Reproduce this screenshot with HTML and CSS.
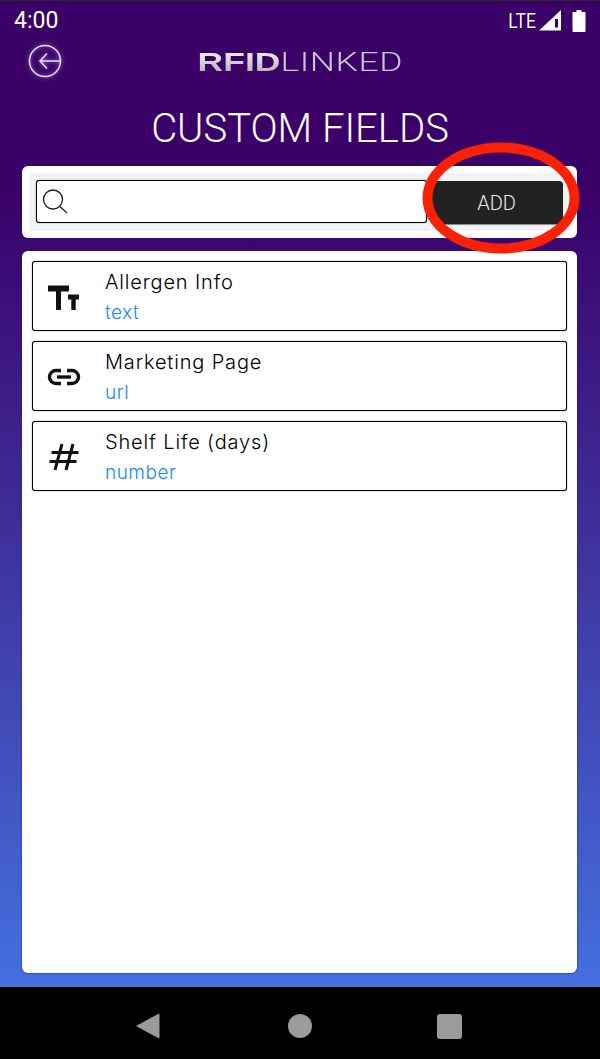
FILE: index.html
```html
<!DOCTYPE html>
<html lang="en">
<head>
    <meta charset="UTF-8">
    <meta name="viewport" content="width=device-width, initial-scale=1.0">
    <title>Custom Fields</title>
    <link rel="stylesheet" href="styles.css">
</head>
<body>

<div class="screen">
    <div class="app">
        <div class="status-bar">
            <span class="clock">4:00</span>
            <div class="status-icons">
                <span class="lte">LTE</span>
                <svg class="signal" width="22" height="22" viewBox="0 0 22 22">
                    <path d="M22 0V20.500H0Z" fill="#fff"/>
                    <path d="M16 9H19V17.500H16Z" fill="#3a0068"/>
                </svg>
                <svg class="battery" width="14" height="22" viewBox="0 0 14 22">
                    <path d="M4.500 0H9.500V2H12.500A1 1 0 0 1 13.500 3V21A1 1 0 0 1 12.500 22H1.500A1 1 0 0 1 .5 21V3A1 1 0 0 1 1.500 2H4.500Z" fill="#fff"/>
                </svg>
            </div>
        </div>

        <div class="top-bar">
            <svg class="back" width="36" height="36" viewBox="0 0 36 36" fill="none" stroke="#e6def0" stroke-width="1.500">
                <circle cx="18" cy="18" r="15.500"/>
                <path d="M33.500 18H13M20 10.500L13 18L20 25.500"/>
            </svg>
            <div class="logo"><span class="logo-bold">RFID</span><span class="logo-thin">LINKED</span></div>
        </div>

        <h1 class="page-title">CUSTOM FIELDS</h1>

        <div class="search-panel">
            <div class="search-inner">
                <div class="search-box">
                    <svg width="28" height="28" viewBox="0 0 28 28" fill="none" stroke="#222" stroke-width="1.300">
                        <circle cx="12" cy="11.500" r="9.500"/>
                        <path d="M19 18.500L26 25"/>
                    </svg>
                </div>
                <button class="add-btn" type="button">ADD</button>
            </div>
        </div>

        <div class="list-panel">
            <div class="field-row">
                <div class="field-icon">
                    <svg width="34" height="25" viewBox="0 0 34 25" fill="#111">
                        <path d="M1 .5H22V6.500H14V25H9V6.500H1Z"/>
                        <path d="M21 9.500H32V14.500H28.700V25H24.300V14.500H21Z"/>
                    </svg>
                </div>
                <div class="field-text">
                    <div class="field-name">Allergen Info</div>
                    <div class="field-type">text</div>
                </div>
            </div>
            <div class="field-row">
                <div class="field-icon">
                    <svg width="34" height="18" viewBox="0 0 34 18" fill="none" stroke="#111" stroke-width="3.400">
                        <path d="M14 2.500H9A6.500 6.500 0 0 0 9 15.500H14"/>
                        <path d="M20 2.500H25A6.500 6.500 0 0 1 25 15.500H20"/>
                        <path d="M10 9H24"/>
                    </svg>
                </div>
                <div class="field-text">
                    <div class="field-name">Marketing Page</div>
                    <div class="field-type">url</div>
                </div>
            </div>
            <div class="field-row">
                <div class="field-icon">
                    <svg width="30" height="30" viewBox="0 0 30 30" fill="none" stroke="#111" stroke-width="3">
                        <path d="M13 2L6 28M24 2L17 28M2.500 10.500H29.500M.5 19.500H27.500"/>
                    </svg>
                </div>
                <div class="field-text">
                    <div class="field-name">Shelf Life (days)</div>
                    <div class="field-type">number</div>
                </div>
            </div>
        </div>

        <!-- red marker drawn over the add button -->
        <svg class="marker" width="160" height="114" viewBox="0 0 160 114" fill="none">
            <ellipse cx="79" cy="56" rx="73.500" ry="50.500" stroke="#fb2104" stroke-width="10"/>
        </svg>
    </div>

    <div class="nav-bar">
        <svg width="25" height="28" viewBox="0 0 26 28" fill="#9b9b9b"><path d="M24 1.500Q25.500 .8 25.500 2.500V25.500Q25.500 27.200 24 26.500L1 14Z"/></svg>
        <div class="nav-circle"></div>
        <div class="nav-square"></div>
    </div>
</div>

</body>
</html>
```

FILE: styles.css
```css
body {
    margin: 0;
    padding: 0;
    font-family: "Inter", "Liberation Sans", sans-serif;
    background-color: #000;
}
.screen {
    width: 600px;
    height: 1059px;
    display: flex;
    flex-direction: column;
    overflow: hidden;
}
.app {
    position: relative;
    flex: 1;
    display: flex;
    flex-direction: column;
    padding: 0 23px 14px 22px;
    border-top: 1px solid #2a2a2a;
    background: linear-gradient(#3a0068 0, #3a0068 190px, #4470e0 100%);
}
.status-bar {
    height: 39px;
    margin: 0 -9px 0 -8px;
    display: flex;
    align-items: center;
    justify-content: space-between;
    color: #fff;
}
.clock {
    font-family: "Roboto", sans-serif;
    font-size: 23px;
}
.status-icons {
    display: flex;
    align-items: center;
    gap: 3px;
}
.lte {
    font-family: "Roboto", sans-serif;
    font-size: 21px;
    transform: scaleX(.84);
    transform-origin: right center;
}
.battery {
    margin-left: 8px;
}
.top-bar {
    position: relative;
    height: 44px;
    display: flex;
    align-items: center;
    justify-content: center;
}
.back {
    position: absolute;
    left: 5px;
    top: 3px;
    filter: drop-shadow(0 0 2px #a98ad0);
}
.logo {
    font-family: "Liberation Sans", sans-serif;
    font-size: 25px;
    line-height: 1;
    display: flex;
    transform: scaleX(1.42);
    margin-left: 1px;
}
.logo-bold {
    font-weight: bold;
    background: linear-gradient(#f4f4f4, #adadb0);
    -webkit-background-clip: text;
    background-clip: text;
    color: transparent;
}
.logo-thin {
    font-family: "Roboto", sans-serif;
    font-weight: 300;
    letter-spacing: .4px;
    color: #c8c8d2;
}
.page-title {
    margin: 0 0 0 1px;
    height: 82px;
    box-sizing: border-box;
    padding-top: 21px;
    font-family: "Roboto", sans-serif;
    font-weight: 300;
    font-size: 40px;
    line-height: 48px;
    text-align: center;
    color: #fff;
}
.search-panel {
    box-sizing: border-box;
    height: 72px;
    padding: 7px;
    background-color: #fff;
    border-radius: 6px;
    box-shadow: 0 0 2px #1a1a8a;
}
.search-inner {
    height: 100%;
    box-sizing: border-box;
    padding: 7px 7px 8px 7px;
    display: flex;
    gap: 5px;
    background-color: #f3f3f3;
}
.search-box {
    flex: 1;
    box-sizing: border-box;
    display: flex;
    align-items: center;
    padding-left: 4px;
    background-color: #fff;
    border: 1px solid #000;
    border-radius: 3px;
    box-shadow: 0 0 1px #000;
}
.add-btn {
    width: 131px;
    height: 43px;
    margin-top: 1px;
    padding: 0 2px 0 0;
    font-family: "Roboto", sans-serif;
    font-weight: 300;
    font-size: 20px;
    color: #e8e8e8;
    background-color: #222;
    border: none;
    border-radius: 4px;
    box-shadow: 0 1px 1px #888;
}
.list-panel {
    flex: 1;
    margin-top: 13px;
    padding: 10px;
    display: flex;
    flex-direction: column;
    gap: 10px;
    background-color: #fff;
    border-radius: 6px;
    box-shadow: 0 0 2px #1a1a8a;
}
.field-row {
    box-sizing: border-box;
    height: 70px;
    display: flex;
    align-items: center;
    background-color: #fff;
    border: 1px solid #000;
    border-radius: 3px;
    box-shadow: 0 0 1px #000;
}
.field-icon {
    width: 62px;
    padding-top: 2px;
    display: flex;
    justify-content: center;
}
.field-text {
    margin-left: 10px;
    padding-top: 1px;
}
.field-name {
    font-weight: 300;
    font-size: 20px;
    line-height: 26px;
    letter-spacing: .85px;
    color: #000;
}
.field-type {
    margin-top: 6px;
    font-weight: 300;
    font-size: 19px;
    line-height: 24px;
    letter-spacing: .5px;
    color: #1488ff;
}
.marker {
    position: absolute;
    left: 422px;
    top: 141px;
}
.nav-bar {
    box-sizing: border-box;
    height: 72px;
    flex-shrink: 0;
    display: flex;
    align-items: center;
    justify-content: center;
    background-color: #000;
    padding: 6px 3px 0 0;
}
.nav-bar svg {
    margin-right: 128px;
}
.nav-circle {
    width: 24px;
    height: 24px;
    border-radius: 50%;
    background-color: #9b9b9b;
}
.nav-square {
    width: 25px;
    height: 25px;
    margin-left: 125px;
    border-radius: 3px;
    background-color: #9b9b9b;
}
```
